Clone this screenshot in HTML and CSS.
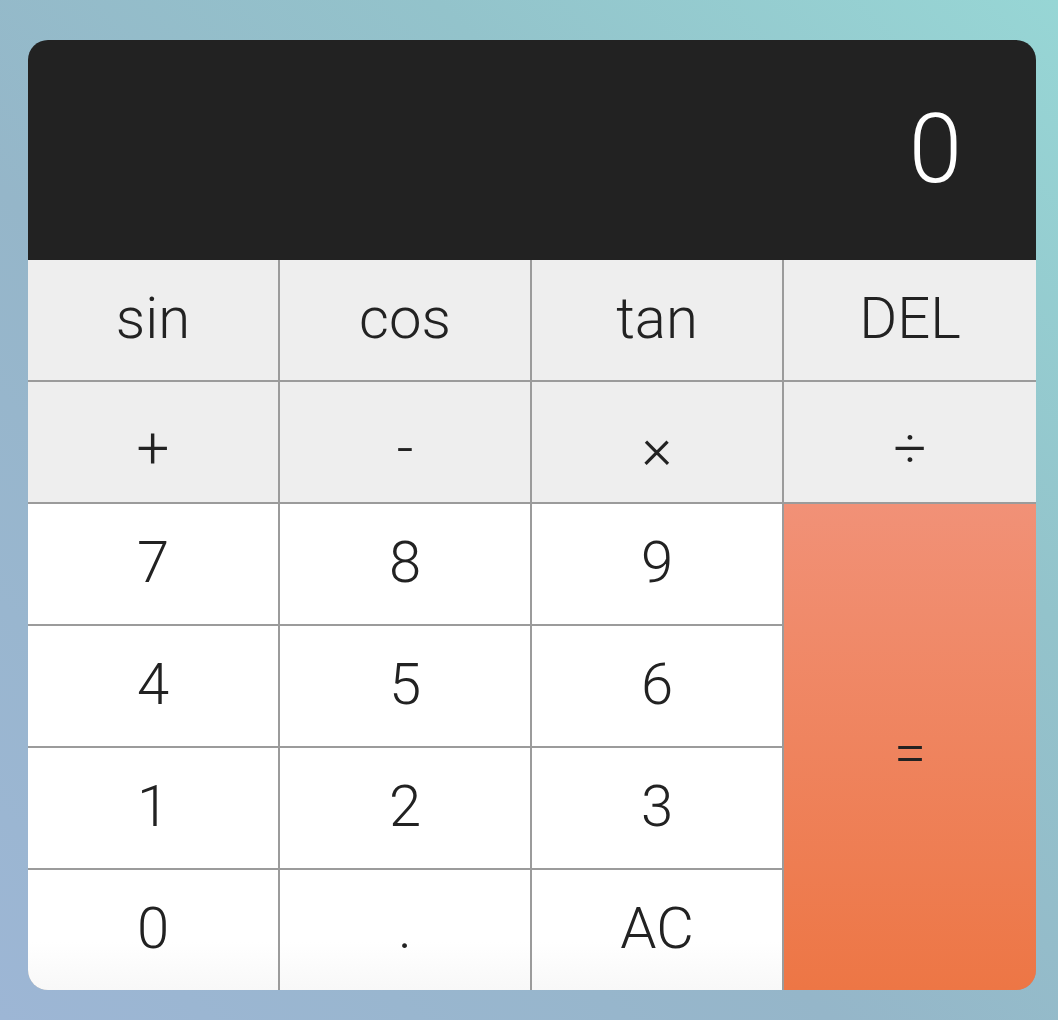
FILE: index.html
```html
<!DOCTYPE html>
<html lang="en">
<head>
<meta charset="utf-8">
<title>Calculator</title>
<link rel="stylesheet" href="styles.css">
</head>
<body>
<main class="calculator">
  <div class="display"><span class="result">0</span></div>
  <div class="keys">
    <button class="key fn">sin</button>
    <button class="key fn">cos</button>
    <button class="key fn">tan</button>
    <button class="key fn">DEL</button>
    <button class="key fn op">+</button>
    <button class="key fn op">-</button>
    <button class="key fn op">×</button>
    <button class="key fn op">÷</button>
    <button class="key num">7</button>
    <button class="key num">8</button>
    <button class="key num">9</button>
    <button class="key equals">=</button>
    <button class="key num">4</button>
    <button class="key num">5</button>
    <button class="key num">6</button>
    <button class="key num">1</button>
    <button class="key num">2</button>
    <button class="key num">3</button>
    <button class="key num last">0</button>
    <button class="key num last">.</button>
    <button class="key num last">AC</button>
  </div>
</main>
</body>
</html>
```

FILE: styles.css
```css
html, body {
  margin: 0;
  padding: 0;
  height: 100%;
}

body {
  background:
    linear-gradient(45deg, #9db6d5 0%, #95b6c9 40%, #93c3cb 70%, #97d6d5 100%);
  font-family: Roboto, "Liberation Sans", sans-serif;
  padding: 40px 22px 30px 28px;
  box-sizing: border-box;
}

.calculator {
  width: 1008px;
  height: 950px;
  border-radius: 20px;
  overflow: hidden;
  display: flex;
  flex-direction: column;
}

.display {
  height: 220px;
  background: #222222;
  display: flex;
  align-items: center;
  justify-content: flex-end;
  padding: 0 74px 2px 0;
  box-sizing: border-box;
}

.result {
  color: #ffffff;
  font-size: 96px;
  font-weight: 300;
  line-height: 1;
}

.keys {
  flex: 1;
  display: grid;
  grid-template-columns: 250px 250px 250px 1fr;
  grid-template-rows: repeat(6, 1fr);
  gap: 2px;
  background: #9b9b9b;
}

.key {
  border: none;
  margin: 0;
  padding: 0 0 4px 0;
  font-family: inherit;
  font-size: 58px;
  font-weight: 300;
  color: #222222;
  display: flex;
  align-items: center;
  justify-content: center;
}

.fn {
  background: #eeeeee;
}

.op {
  padding: 12px 0 0 0;
}

.num {
  background: #ffffff;
}

.num.last {
  background: linear-gradient(to bottom, #ffffff 60%, #f8f8f8 100%);
}

.equals {
  grid-column: 4;
  grid-row: 3 / span 4;
  padding: 12px 0 0 0;
  background: linear-gradient(to bottom, #f19177 0%, #ed7645 100%);
}
```
